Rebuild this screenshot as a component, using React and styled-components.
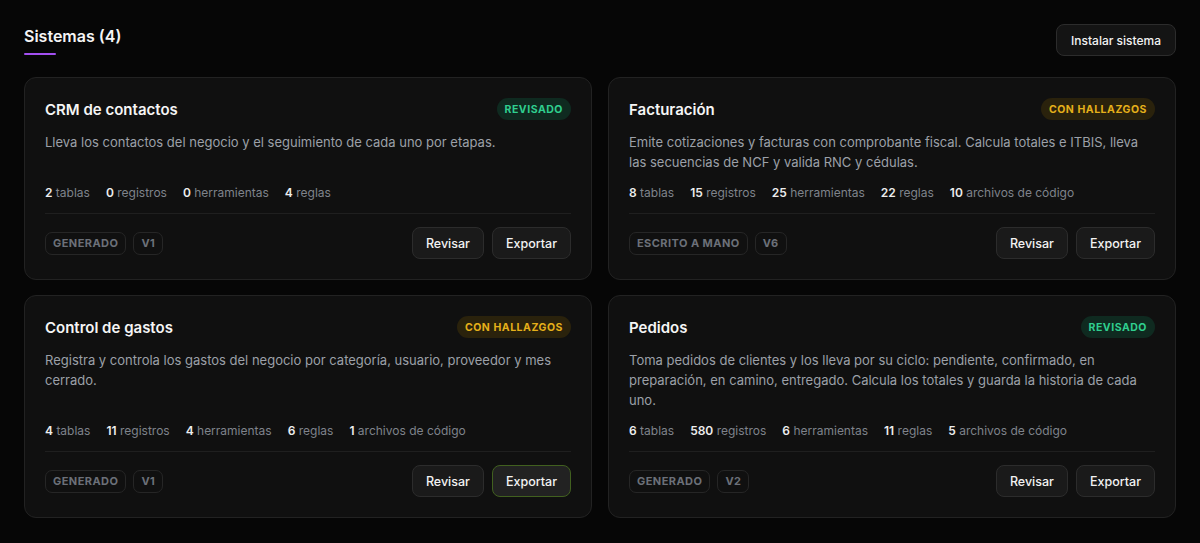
import React from 'react';
import styled, { createGlobalStyle, css } from 'styled-components';

const GlobalStyle = createGlobalStyle`
  html, body {
    margin: 0;
    padding: 0;
    background: #060606;
  }
  body {
    font-family: Inter, "Noto Sans", sans-serif;
    color: #f2f2f2;
    -webkit-font-smoothing: antialiased;
  }
  * { box-sizing: border-box; }
`;

const Page = styled.div`
  padding: 24px 24px 24px;
  min-height: 543px;
`;

const Header = styled.div`
  display: flex;
  justify-content: space-between;
  align-items: flex-start;
  margin-bottom: 21px;
`;

const HeadingBlock = styled.div`
  padding-top: 1px;
`;

const Heading = styled.h1`
  margin: 0;
  font-size: 16px;
  line-height: 22px;
  font-weight: 600;
  color: #f5f5f5;
`;

const Underline = styled.div`
  width: 32px;
  height: 2px;
  margin-top: 6px;
  border-radius: 1px;
  background: #a24ff0;
`;

const Button = styled.button`
  height: 32px;
  padding: 0 13px;
  font-family: inherit;
  font-size: 12.5px;
  font-weight: 500;
  color: #f2f2f2;
  background: #1a1a1a;
  border: 1px solid #2c2c2c;
  border-radius: 8px;
  cursor: pointer;
  ${(p) =>
    p.$active &&
    css`
      background: #222222;
      border-color: #41601f;
    `}
`;

const InstallButton = styled(Button)`
  background: #141414;
  font-size: 12px;
  padding: 0 14px;
`;

const Grid = styled.div`
  display: grid;
  grid-template-columns: 1fr 1fr;
  column-gap: 16px;
  row-gap: 15px;
`;

const Card = styled.div`
  display: flex;
  flex-direction: column;
  padding: 20px 20px 20px;
  background: #101010;
  border: 1px solid #222222;
  border-radius: 12px;
`;

const CardTop = styled.div`
  display: flex;
  justify-content: space-between;
  align-items: center;
  height: 22px;
`;

const CardTitle = styled.h2`
  margin: 0;
  font-size: 15px;
  font-weight: 600;
  color: #f5f5f5;
`;

const badgeTones = {
  ok: css`
    color: #2fcf8f;
    background: #0f2a20;
  `,
  warn: css`
    color: #e5b01a;
    background: #2a220c;
  `,
};

const Badge = styled.span`
  display: inline-flex;
  align-items: center;
  height: 22px;
  padding: 0 8px;
  border-radius: 11px;
  font-size: 10.5px;
  font-weight: 700;
  letter-spacing: 0.05em;
  ${(p) => badgeTones[p.$tone]}
`;

const Description = styled.p`
  margin: 12px 0 0;
  font-size: 13px;
  line-height: 20px;
  color: #9ca0a8;
`;

const Stats = styled.div`
  display: flex;
  gap: 16px;
  margin-top: auto;
  padding-top: 13px;
  font-size: 12px;
  line-height: 16px;
`;

const Stat = styled.span`
  color: #7f838b;
  b {
    font-weight: 600;
    color: #ededed;
  }
`;

const Footer = styled.div`
  display: flex;
  justify-content: space-between;
  align-items: center;
  margin-top: 12px;
  padding-top: 13px;
  border-top: 1px solid #1f1f1f;
`;

const Tags = styled.div`
  display: flex;
  gap: 7px;
`;

const Tag = styled.span`
  display: inline-flex;
  align-items: center;
  height: 23px;
  padding: 0 7px;
  border: 1px solid #262626;
  border-radius: 7px;
  font-size: 11px;
  font-weight: 700;
  letter-spacing: 0.04em;
  color: #6c7079;
`;

const Actions = styled.div`
  display: flex;
  gap: 8px;
`;

const systems = [
  {
    name: 'CRM de contactos',
    status: 'REVISADO',
    tone: 'ok',
    description: 'Lleva los contactos del negocio y el seguimiento de cada uno por etapas.',
    stats: [
      [2, 'tablas'],
      [0, 'registros'],
      [0, 'herramientas'],
      [4, 'reglas'],
    ],
    origin: 'GENERADO',
    version: 'V1',
  },
  {
    name: 'Facturación',
    status: 'CON HALLAZGOS',
    tone: 'warn',
    description:
      'Emite cotizaciones y facturas con comprobante fiscal. Calcula totales e ITBIS, lleva las secuencias de NCF y valida RNC y cédulas.',
    stats: [
      [8, 'tablas'],
      [15, 'registros'],
      [25, 'herramientas'],
      [22, 'reglas'],
      [10, 'archivos de código'],
    ],
    origin: 'ESCRITO A MANO',
    version: 'V6',
  },
  {
    name: 'Control de gastos',
    status: 'CON HALLAZGOS',
    tone: 'warn',
    description:
      'Registra y controla los gastos del negocio por categoría, usuario, proveedor y mes cerrado.',
    stats: [
      [4, 'tablas'],
      [11, 'registros'],
      [4, 'herramientas'],
      [6, 'reglas'],
      [1, 'archivos de código'],
    ],
    origin: 'GENERADO',
    version: 'V1',
    exportActive: true,
  },
  {
    name: 'Pedidos',
    status: 'REVISADO',
    tone: 'ok',
    description:
      'Toma pedidos de clientes y los lleva por su ciclo: pendiente, confirmado, en preparación, en camino, entregado. Calcula los totales y guarda la historia de cada uno.',
    stats: [
      [6, 'tablas'],
      [580, 'registros'],
      [6, 'herramientas'],
      [11, 'reglas'],
      [5, 'archivos de código'],
    ],
    origin: 'GENERADO',
    version: 'V2',
  },
];

function SystemCard({ system }) {
  return (
    <Card>
      <CardTop>
        <CardTitle>{system.name}</CardTitle>
        <Badge $tone={system.tone}>{system.status}</Badge>
      </CardTop>
      <Description>{system.description}</Description>
      <Stats>
        {system.stats.map(([n, label]) => (
          <Stat key={label}>
            <b>{n}</b> {label}
          </Stat>
        ))}
      </Stats>
      <Footer>
        <Tags>
          <Tag>{system.origin}</Tag>
          <Tag>{system.version}</Tag>
        </Tags>
        <Actions>
          <Button>Revisar</Button>
          <Button $active={system.exportActive}>Exportar</Button>
        </Actions>
      </Footer>
    </Card>
  );
}

export default function App() {
  return (
    <>
      <GlobalStyle />
      <Page>
        <Header>
          <HeadingBlock>
            <Heading>Sistemas ({systems.length})</Heading>
            <Underline />
          </HeadingBlock>
          <InstallButton>Instalar sistema</InstallButton>
        </Header>
        <Grid>
          {systems.map((s) => (
            <SystemCard key={s.name} system={s} />
          ))}
        </Grid>
      </Page>
    </>
  );
}
